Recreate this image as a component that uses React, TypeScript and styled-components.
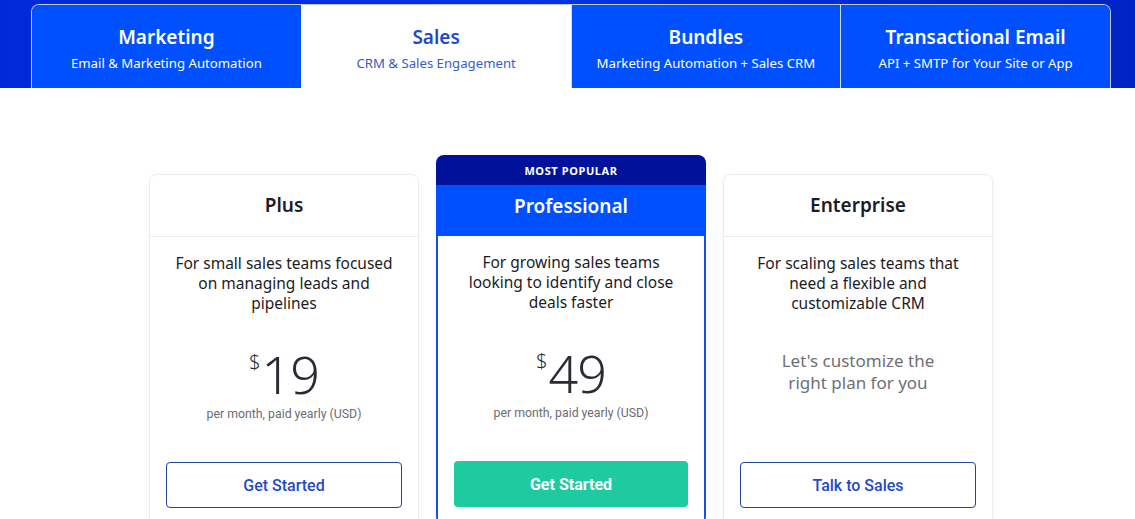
import styled, { createGlobalStyle } from "styled-components";

const GlobalStyle = createGlobalStyle`
  * { box-sizing: border-box; }
  body {
    margin: 0;
    background: #ffffff;
    font-family: "Noto Sans", "Open Sans", sans-serif;
    color: #1c1c24;
  }
`;

const Header = styled.header`
  height: 88px;
  padding-top: 4px;
  background: linear-gradient(90deg, #0029d9 0%, #0032e6 50%, #0023c4 100%);
  display: flex;
  justify-content: center;
  padding-left: 7px;
`;

const TabStrip = styled.nav`
  display: flex;
  width: 1080px;
  border: 1px solid rgba(255, 255, 255, 0.75);
  border-bottom: none;
  border-radius: 8px 8px 0 0;
  overflow: hidden;
`;

const Tab = styled.a<{ $active?: boolean }>`
  flex: 1;
  display: flex;
  flex-direction: column;
  align-items: center;
  padding-top: 19px;
  text-decoration: none;
  background: ${(p) => (p.$active ? "#ffffff" : "#0050ff")};
  color: ${(p) => (p.$active ? "#1f49c9" : "#ffffff")};
  & + & {
    border-left: 1px solid rgba(255, 255, 255, 0.8);
  }
`;

const TabTitle = styled.span`
  font-size: 19px;
  font-weight: 600;
  line-height: 26px;
`;

const TabSub = styled.span<{ $active?: boolean }>`
  font-size: 13.2px;
  line-height: 18px;
  margin-top: 4px;
  color: ${(p) => (p.$active ? "#3a5cc6" : "#ffffff")};
`;

const CardRow = styled.main`
  display: flex;
  justify-content: center;
  align-items: flex-start;
  gap: 17px;
  padding-top: 67px;
  padding-left: 7px;
`;

const Card = styled.section<{ $featured?: boolean }>`
  width: 270px;
  height: 370px;
  margin-top: ${(p) => (p.$featured ? "0" : "19px")};
  border-radius: 8px;
  overflow: hidden;
  border: ${(p) => (p.$featured ? "none" : "1px solid #e9ecf2")};
  box-shadow: 0 2px 6px rgba(20, 30, 80, 0.05);
  background: #fff;
  display: flex;
  flex-direction: column;
`;

const Banner = styled.div`
  height: 30px;
  background: #00129a;
  color: #fff;
  font-size: 11px;
  font-weight: 700;
  letter-spacing: 0.6px;
  display: flex;
  align-items: center;
  justify-content: center;
  padding-top: 1px;
`;

const CardHead = styled.div<{ $featured?: boolean }>`
  height: ${(p) => (p.$featured ? "51px" : "62px")};
  display: flex;
  align-items: center;
  justify-content: center;
  font-size: 19px;
  font-weight: 600;
  background: ${(p) => (p.$featured ? "#0050ff" : "#fff")};
  color: ${(p) => (p.$featured ? "#fff" : "#1c1c24")};
  border-bottom: ${(p) => (p.$featured ? "none" : "1px solid #e9ecf2")};
  padding-bottom: ${(p) => (p.$featured ? "9px" : "2px")};
`;

const CardBody = styled.div<{ $featured?: boolean }>`
  flex: 1;
  display: flex;
  flex-direction: column;
  align-items: center;
  padding: 16px 16px 0;
  border: ${(p) => (p.$featured ? "2px solid #1a4fe0" : "none")};
  border-top: none;
`;

const Description = styled.p`
  margin: 0;
  height: 60px;
  max-width: 226px;
  font-size: 15.5px;
  line-height: 20px;
  text-align: center;
  color: #1c1c24;
`;

const PriceArea = styled.div`
  height: 149px;
  display: flex;
  flex-direction: column;
  align-items: center;
  justify-content: center;
  padding-bottom: 6px;
`;

const Price = styled.div`
  display: flex;
  align-items: flex-start;
  color: #2a2b35;
  line-height: 1;
`;

const Currency = styled.span`
  font-size: 20px;
  font-weight: 300;
  margin-top: 4px;
  margin-right: 1px;
`;

const Amount = styled.span`
  font-size: 52px;
  font-weight: 300;
  letter-spacing: -1px;
`;

const Period = styled.span`
  margin-top: 7px;
  font-family: "Roboto", "Liberation Sans", sans-serif;
  font-size: 12.3px;
  color: #6b6b73;
`;

const Custom = styled.div`
  font-size: 17px;
  line-height: 22px;
  color: #6f6f76;
  text-align: center;
  margin-top: -26px;
`;

const Button = styled.button<{ $primary?: boolean }>`
  width: 100%;
  height: 46px;
  border-radius: 4px;
  font-family: "Roboto", "Liberation Sans", sans-serif;
  font-size: 16px;
  font-weight: ${(p) => (p.$primary ? 700 : 500)};
  cursor: pointer;
  background: ${(p) => (p.$primary ? "#1ecba1" : "#fff")};
  color: ${(p) => (p.$primary ? "#fff" : "#1f4bc4")};
  border: ${(p) => (p.$primary ? "none" : "1px solid #23459e")};
`;

const tabs = [
  { title: "Marketing", sub: "Email & Marketing Automation" },
  { title: "Sales", sub: "CRM & Sales Engagement", active: true },
  { title: "Bundles", sub: "Marketing Automation + Sales CRM" },
  { title: "Transactional Email", sub: "API + SMTP for Your Site or App" },
];

export default function App() {
  return (
    <>
      <GlobalStyle />
      <Header>
        <TabStrip>
          {tabs.map((t) => (
            <Tab key={t.title} $active={t.active}>
              <TabTitle>{t.title}</TabTitle>
              <TabSub $active={t.active}>{t.sub}</TabSub>
            </Tab>
          ))}
        </TabStrip>
      </Header>
      <CardRow>
        <Card>
          <CardHead>Plus</CardHead>
          <CardBody>
            <Description>
              For small sales teams focused on managing leads and pipelines
            </Description>
            <PriceArea>
              <Price>
                <Currency>$</Currency>
                <Amount>19</Amount>
              </Price>
              <Period>per month, paid yearly (USD)</Period>
            </PriceArea>
            <Button>Get Started</Button>
          </CardBody>
        </Card>
        <Card $featured>
          <Banner>MOST POPULAR</Banner>
          <CardHead $featured>Professional</CardHead>
          <CardBody $featured>
            <Description>
              For growing sales teams looking to identify and close deals faster
            </Description>
            <PriceArea>
              <Price>
                <Currency>$</Currency>
                <Amount>49</Amount>
              </Price>
              <Period>per month, paid yearly (USD)</Period>
            </PriceArea>
            <Button $primary>Get Started</Button>
          </CardBody>
        </Card>
        <Card>
          <CardHead>Enterprise</CardHead>
          <CardBody>
            <Description>
              For scaling sales teams that need a flexible and customizable CRM
            </Description>
            <PriceArea>
              <Custom>
                Let's customize the
                <br />
                right plan for you
              </Custom>
            </PriceArea>
            <Button>Talk to Sales</Button>
          </CardBody>
        </Card>
      </CardRow>
    </>
  );
}
